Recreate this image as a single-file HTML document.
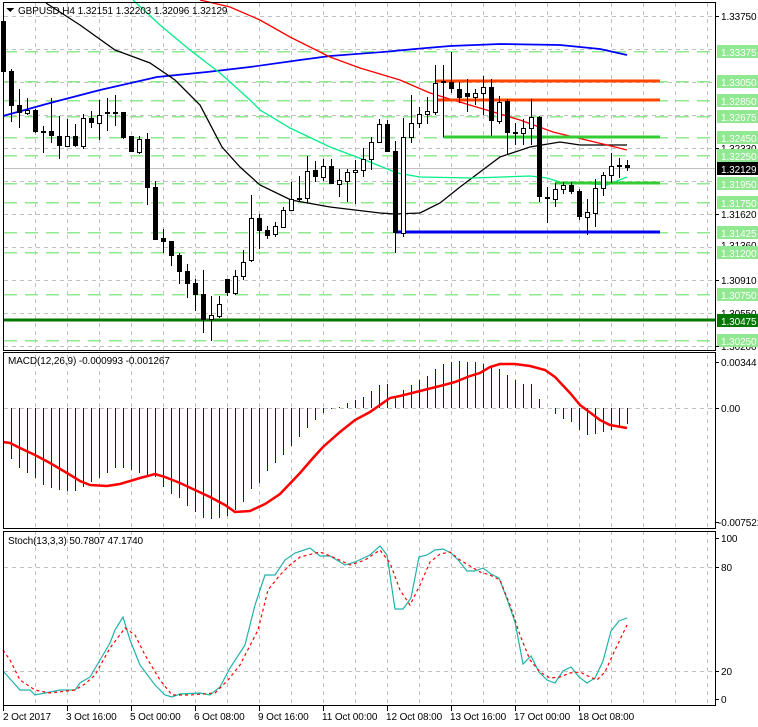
<!DOCTYPE html>
<html><head><meta charset="utf-8"><style>
html,body{margin:0;padding:0;background:#fff;width:758px;height:727px;overflow:hidden}
svg{display:block;font-family:"Liberation Sans",sans-serif;font-size:10px;letter-spacing:-0.1px}
</style></head><body>
<svg width="758" height="727" viewBox="0 0 758 727" xmlns="http://www.w3.org/2000/svg" shape-rendering="crispEdges">
<rect width="758" height="727" fill="#fff"/>
<g stroke="#c0c0c0" stroke-dasharray="4,4">
<path d="M35.5 3V705M67.5 3V705M99.5 3V705M131.5 3V705M163.5 3V705M195.5 3V705M227.5 3V705M259.5 3V705M291.5 3V705M323.5 3V705M355.5 3V705M387.5 3V705M419.5 3V705M451.5 3V705M483.5 3V705M515.5 3V705M547.5 3V705M579.5 3V705M611.5 3V705M643.5 3V705M675.5 3V705M707.5 3V705"/>
<path d="M4 16.5H716M4 49.5H716M4 82.5H716M4 115.5H716M4 148.5H716M4 181.5H716M4 214.5H716M4 247.5H716M4 280.5H716M4 313.5H716M4 346.5H716"/>
<path d="M4 408.5H716M4 567.5H716M4 671.5H716"/>
</g>
<g stroke="#90e890" stroke-width="1.5" stroke-dasharray="13,8">
<path d="M4 51.5H716M4 81.5H716M4 100.5H716M4 116.5H716M4 137.5H716M4 155.5H716M4 183.5H716M4 202.5H716M4 232.5H716M4 252.5H716M4 294.5H716M4 340.5H716"/>
</g>
<path d="M4 168.5H716" stroke="#c0c0c0"/>
<g fill="none" stroke-width="1.3" shape-rendering="auto">
<polyline stroke="#0000ff" stroke-width="1.7" points="3,116 50,103 100,90 157,77 207,72 250,67 300,60 330,56 383,52 415,49 450,46 500,44 560,45 600,49 627,55"/>
<polyline stroke="#000" points="46,3 80,25 115,50 150,63 175,80 200,105 222,147 240,167 260,185 291,200 330,207 380,213 395,214 420,213 440,203 460,187 480,172 500,157 530,147 560,142 580,145 627,145"/>
<polyline stroke="#00ee88" points="133,0 160,25 190,50 220,73 250,100 260,110 290,128 330,147 370,162 397,173 420,177 473,178 530,176 547,178 560,182 607,185 627,177"/>
<polyline stroke="#ff0000" points="200,0 230,7 260,20 290,37 330,57 360,68 400,80 430,93 453,100 520,120 553,132 607,145 627,150"/>
</g>
<g stroke-width="3">
<path d="M435 81H660M435 100H660" stroke="#ff4500"/>
<path d="M443 137H660M555 183H660" stroke="#33cc33"/>
<path d="M395 232H660" stroke="#0000ee"/>
<path d="M4 320H716" stroke="#007700"/>
</g>
<g stroke="#000" stroke-width="1">
<path d="M3.5 15V87M11.5 69V122M19.5 89V128M27.5 98V115M35.5 109V133M43.5 126V153M51.5 98V143M59.5 116V159M67.5 119V147M75.5 124V147M83.5 114V149M91.5 111V128M99.5 100V140M107.5 98V131M115.5 95V126M123.5 112V139M131.5 136V152M139.5 136V154M147.5 133V205M155.5 181V240M163.5 229V253M171.5 241V266M179.5 253V284M187.5 264V298M195.5 279V311M203.5 270V333M211.5 296V341M219.5 296V318M227.5 279V296M235.5 270V295M243.5 250V280M251.5 195V262M259.5 214V249M267.5 226V239M275.5 222V237M283.5 207V228M291.5 182V210M299.5 176V202M307.5 156V203M315.5 161V182M323.5 159V181M331.5 159V184M339.5 169V197M347.5 169V202M355.5 160V204M363.5 148V177M371.5 137V170M379.5 119V143M387.5 120V152M395.5 141V253M403.5 118V237M411.5 95V143M419.5 107V128M427.5 97V124M435.5 65V115M443.5 65V137M451.5 52V93M459.5 82V103M467.5 79V112M475.5 89V105M483.5 76V115M491.5 79V136M499.5 96V124M507.5 99V155M515.5 123V145M523.5 119V145M531.5 99V145M539.5 116V202M547.5 187V223M555.5 183V207M563.5 182V194M571.5 182V194M579.5 189V220M587.5 199V235M595.5 179V227M603.5 172V196M611.5 153V183M619.5 158V178M627.5 160V171"/>
</g>
<g fill="#000">
<rect x="1" y="21" width="5" height="51"/><rect x="9" y="71" width="5" height="35"/><rect x="17" y="105" width="5" height="8"/><rect x="33" y="110" width="5" height="22"/><rect x="41" y="131" width="5" height="2"/><rect x="49" y="131" width="5" height="5"/><rect x="57" y="136" width="5" height="10"/><rect x="73" y="136" width="5" height="10"/><rect x="89" y="118" width="5" height="5"/><rect x="105" y="112" width="5" height="2"/><rect x="113" y="112" width="5" height="2"/><rect x="121" y="112" width="5" height="26"/><rect x="129" y="136" width="5" height="16"/><rect x="145" y="139" width="5" height="49"/><rect x="153" y="187" width="5" height="53"/><rect x="161" y="238" width="5" height="4"/><rect x="169" y="241" width="5" height="15"/><rect x="177" y="255" width="5" height="17"/><rect x="185" y="271" width="5" height="13"/><rect x="193" y="283" width="5" height="12"/><rect x="201" y="294" width="5" height="26"/><rect x="225" y="279" width="5" height="14"/><rect x="257" y="218" width="5" height="13"/><rect x="265" y="230" width="5" height="6"/><rect x="297" y="198" width="5" height="2"/><rect x="313" y="170" width="5" height="7"/><rect x="329" y="166" width="5" height="18"/><rect x="385" y="124" width="5" height="28"/><rect x="393" y="151" width="5" height="82"/><rect x="441" y="81" width="5" height="2"/><rect x="449" y="82" width="5" height="7"/><rect x="457" y="89" width="5" height="9"/><rect x="465" y="93" width="5" height="4"/><rect x="489" y="87" width="5" height="34"/><rect x="505" y="101" width="5" height="32"/><rect x="513" y="132" width="5" height="2"/><rect x="537" y="117" width="5" height="80"/><rect x="545" y="197" width="5" height="2"/><rect x="569" y="185" width="5" height="7"/><rect x="577" y="191" width="5" height="26"/><rect x="617" y="165" width="5" height="2"/><rect x="625" y="165" width="5" height="3"/>
</g>
<g fill="#fff" stroke="#000">
<rect x="25.5" y="110.5" width="4" height="3"/><rect x="65.5" y="136.5" width="4" height="10"/><rect x="81.5" y="118.5" width="4" height="28"/><rect x="97.5" y="115.5" width="4" height="8"/><rect x="137.5" y="139.5" width="4" height="13"/><rect x="209.5" y="315.5" width="4" height="4"/><rect x="217.5" y="304.5" width="4" height="12"/><rect x="233.5" y="276.5" width="4" height="17"/><rect x="241.5" y="262.5" width="4" height="14"/><rect x="249.5" y="218.5" width="4" height="42"/><rect x="273.5" y="226.5" width="4" height="8"/><rect x="281.5" y="210.5" width="4" height="17"/><rect x="289.5" y="199.5" width="4" height="11"/><rect x="305.5" y="171.5" width="4" height="27"/><rect x="321.5" y="166.5" width="4" height="11"/><rect x="337.5" y="180.5" width="4" height="4"/><rect x="345.5" y="172.5" width="4" height="9"/><rect x="353.5" y="170.5" width="4" height="2"/><rect x="361.5" y="159.5" width="4" height="11"/><rect x="369.5" y="142.5" width="4" height="17"/><rect x="377.5" y="124.5" width="4" height="18"/><rect x="401.5" y="137.5" width="4" height="96"/><rect x="409.5" y="123.5" width="4" height="14"/><rect x="417.5" y="114.5" width="4" height="9"/><rect x="425.5" y="111.5" width="4" height="3"/><rect x="433.5" y="83.5" width="4" height="29"/><rect x="473.5" y="93.5" width="4" height="4"/><rect x="481.5" y="87.5" width="4" height="6"/><rect x="497.5" y="102.5" width="4" height="19"/><rect x="521.5" y="128.5" width="4" height="5"/><rect x="529.5" y="117.5" width="4" height="11"/><rect x="553.5" y="189.5" width="4" height="10"/><rect x="561.5" y="185.5" width="4" height="4"/><rect x="585.5" y="212.5" width="4" height="5"/><rect x="593.5" y="188.5" width="4" height="25"/><rect x="601.5" y="175.5" width="4" height="13"/><rect x="609.5" y="166.5" width="4" height="9"/>
</g>
<text x="18" y="14" fill="#000">GBPUSD,H4  1.32151 1.32203 1.32096 1.32129</text>
<path d="M6 8H14L10 12Z" fill="#000"/>
<g stroke="#0000dd">
<path d="M3.5 408V450M11.5 408V459M19.5 408V468M27.5 408V473M35.5 408V478M43.5 408V485M51.5 408V488M59.5 408V490M67.5 408V491M75.5 408V491M83.5 408V487M91.5 408V482M99.5 408V478M107.5 408V473M115.5 408V468M123.5 408V468M131.5 408V470M139.5 408V473M147.5 408V475M155.5 408V477M163.5 408V487M171.5 408V494M179.5 408V498M187.5 408V506M195.5 408V512M203.5 408V518M211.5 408V519M219.5 408V518M227.5 408V516M235.5 408V510M243.5 408V502M251.5 408V489M259.5 408V483M267.5 408V471M275.5 408V463M283.5 408V455M291.5 408V446M299.5 408V437M307.5 408V428M315.5 408V420M323.5 408V413M331.5 408V409M339.5 408V407M347.5 408V403M355.5 408V400M363.5 408V397M371.5 408V391M379.5 408V385M387.5 408V384M395.5 408V397M403.5 408V390M411.5 408V385M419.5 408V380M427.5 408V376M435.5 408V369M443.5 408V364M451.5 408V362M459.5 408V361M467.5 408V362M475.5 408V362M483.5 408V364M491.5 408V367M499.5 408V369M507.5 408V375M515.5 408V380M523.5 408V384M531.5 408V384M539.5 408V399M555.5 408V414M563.5 408V419M571.5 408V422M579.5 408V430M587.5 408V435M595.5 408V434M603.5 408V432M611.5 408V430M619.5 408V428M627.5 408V424"/>
</g>
<polyline fill="none" stroke="#ff0000" stroke-width="2.5" shape-rendering="auto" points="3,442 10,443 20,448 35,455 50,463 67,473 80,481 90,485 107,486 120,484 140,478 155,474 165,477 180,483 195,490 210,497 225,505 235,512 250,511 265,504 280,494 300,473 313,458 323,447 340,432 355,420 370,412 380,405 390,398 400,396 420,391 440,386 455,382 470,376 480,373 490,367 500,364 515,364 530,366 545,370 555,377 570,393 580,405 600,420 610,425 627,428"/>
<text x="8" y="364" fill="#000">MACD(12,26,9) -0.000993 -0.001267</text>
<g fill="none" shape-rendering="auto">
<polyline stroke="#20b2aa" stroke-width="1.2" points="3,671 20,690 30,690 35,695 45,693 60,690 75,690 80,683 90,677 100,660 110,643 115,630 123,617 130,640 140,665 155,685 165,695 172,697 180,694 200,693 210,695 220,687 230,668 245,645 255,605 265,575 275,575 285,560 295,553 310,548 320,556 330,556 345,565 355,562 370,555 380,546 387,555 395,609 403,609 411,598 419,557 427,555 435,550 443,549 451,553 459,561 467,571 475,571 483,568 491,574 499,578 507,599 515,622 523,664 531,656 539,672 547,680 555,683 563,671 571,667 579,677 587,683 595,678 603,661 611,631 619,621 627,618"/>
<polyline stroke="#ff0000" stroke-width="1.2" stroke-dasharray="3,3" points="3,650 10,660 20,680 35,690 50,693 75,690 85,684 95,675 110,648 125,628 135,635 145,655 160,680 172,695 190,695 215,693 228,680 240,665 258,630 268,590 280,575 290,565 300,557 320,552 335,558 350,565 365,560 380,550 390,563 400,590 410,605 420,585 430,562 440,554 450,552 460,560 470,566 480,572 490,575 500,580 510,605 520,635 530,660 540,672 550,678 560,677 570,673 580,672 590,677 597,680 605,672 615,650 627,625"/>
</g>
<text x="8" y="544" fill="#000">Stoch(13,3,3) 50.7807 47.1740</text>
<g fill="none" stroke="#000">
<rect x="3.5" y="2.5" width="712" height="348"/>
<rect x="3.5" y="352.5" width="712" height="176"/>
<rect x="3.5" y="531.5" width="712" height="174"/>
</g>
<g fill="#000">
<text x="721" y="20">1.33750</text>
<text x="721" y="152">1.32330</text>
<text x="721" y="218">1.31620</text>
<text x="721" y="249">1.31360</text>
<text x="721" y="284">1.30910</text>
<text x="721" y="317">1.30550</text>
<text x="721" y="350">1.30200</text>
<text x="721" y="366">0.00344</text>
<text x="721" y="412">0.00</text>
<text x="718" y="526">-0.007521</text>
<text x="721" y="542">100</text>
<text x="721" y="571">80</text>
<text x="721" y="675">20</text>
<text x="721" y="703">0</text>
</g>
<g fill="#90e890">
<rect x="717" y="45" width="41" height="13"/><rect x="717" y="75" width="41" height="13"/><rect x="717" y="94" width="41" height="13"/><rect x="717" y="110" width="41" height="13"/><rect x="717" y="131" width="41" height="13"/><rect x="717" y="149" width="41" height="13"/><rect x="717" y="177" width="41" height="13"/><rect x="717" y="196" width="41" height="13"/><rect x="717" y="226" width="41" height="13"/><rect x="717" y="246" width="41" height="13"/><rect x="717" y="288" width="41" height="13"/><rect x="717" y="334" width="41" height="13"/>
</g>
<rect x="717" y="162" width="41" height="13" fill="#000"/>
<rect x="717" y="314" width="41" height="13" fill="#007700"/>
<g fill="#fff">
<text x="721" y="56">1.33375</text><text x="721" y="86">1.33050</text><text x="721" y="105">1.32850</text><text x="721" y="121">1.32675</text><text x="721" y="142">1.32450</text><text x="721" y="160">1.32250</text><text x="721" y="173">1.32129</text><text x="721" y="188">1.31950</text><text x="721" y="207">1.31750</text><text x="721" y="237">1.31425</text><text x="721" y="257">1.31200</text><text x="721" y="299">1.30750</text><text x="721" y="325">1.30475</text><text x="721" y="345">1.30250</text>
</g>
<g stroke="#000"><path d="M716 16.5h3M716 148.5h3M716 214.5h3M716 280.5h3M716 346.5h3M716 362.5h3M716 408.5h3M716 522.5h3M716 538.5h3M716 567.5h3M716 671.5h3M716 699.5h3"/></g>
<g stroke="#000"><path d="M3.5 706V711M67.5 706V711M131.5 706V711M195.5 706V711M259.5 706V711M323.5 706V711M387.5 706V711M451.5 706V711M515.5 706V711M579.5 706V711"/></g>
<g fill="#000">
<text x="3" y="720">2 Oct 2017</text><text x="66" y="720">3 Oct 16:00</text><text x="130" y="720">5 Oct 00:00</text><text x="194" y="720">6 Oct 08:00</text><text x="258" y="720">9 Oct 16:00</text><text x="322" y="720">11 Oct 00:00</text><text x="386" y="720">12 Oct 08:00</text><text x="450" y="720">13 Oct 16:00</text><text x="514" y="720">17 Oct 00:00</text><text x="578" y="720">18 Oct 08:00</text>
</g>
</svg>
</body></html>
